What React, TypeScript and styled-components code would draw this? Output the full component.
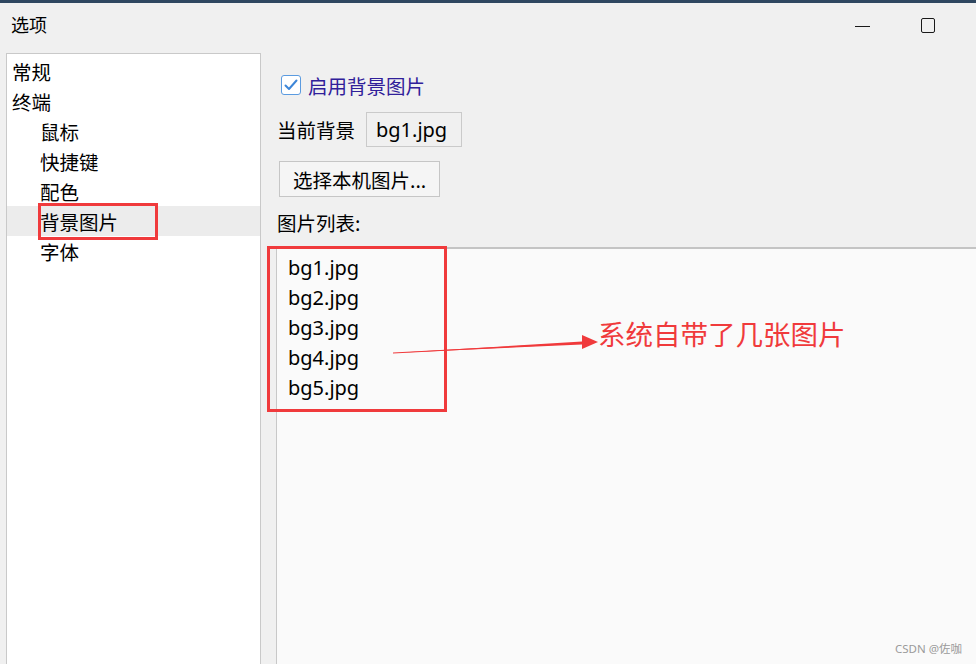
import styled, { createGlobalStyle } from "styled-components";

const GlobalStyle = createGlobalStyle`
  html, body {
    margin: 0;
    padding: 0;
    background: #f0f0f0;
  }
  body {
    font-family: "Noto Sans", "Noto Sans CJK SC", sans-serif;
    color: #000;
  }
`;

const Window = styled.div`
  width: 976px;
  height: 664px;
  background: #f0f0f0;
  border-top: 3px solid #2f4760;
  box-sizing: border-box;
  display: flex;
  flex-direction: column;
  overflow: hidden;
  position: relative;
`;

const TitleBar = styled.div`
  height: 50px;
  display: flex;
  align-items: center;
  padding: 0 0 8px 11px;
  box-sizing: border-box;
`;

const Title = styled.div`
  font-family: "Noto Sans CJK SC", sans-serif;
  font-size: 18px;
  flex: 1;
`;

const MinBtn = styled.div`
  width: 15px;
  height: 1px;
  background: #1a1a1a;
  margin-right: 51px;
  margin-top: 4px;
`;

const MaxBtn = styled.div`
  width: 14px;
  height: 15px;
  border: 1.5px solid #1a1a1a;
  border-radius: 2px;
  box-sizing: border-box;
  margin-right: 41px;
  margin-top: 3px;
`;

const Body = styled.div`
  flex: 1;
  display: flex;
  min-height: 0;
`;

const Sidebar = styled.div`
  width: 255px;
  margin-left: 6px;
  background: #fff;
  border: 1px solid #c9c9c9;
  border-bottom: none;
  box-sizing: border-box;
  padding-top: 2px;
`;

const TreeItem = styled.div<{ $depth: number; $selected?: boolean }>`
  height: 30px;
  display: flex;
  align-items: center;
  padding-left: ${(p) => (p.$depth ? 33 : 5)}px;
  background: ${(p) => (p.$selected ? "#ececec" : "transparent")};
  font-family: "Noto Sans CJK SC", sans-serif;
  font-size: 19.5px;
  padding-top: 1px;
  box-sizing: border-box;
`;

const Marked = styled.span<{ $left: number; $right: number; $padY: number }>`
  position: relative;
  &::after {
    content: "";
    position: absolute;
    left: -${(p) => p.$left}px;
    right: -${(p) => p.$right}px;
    top: -${(p) => p.$padY}px;
    bottom: -${(p) => p.$padY}px;
    border: 3px solid #f03a3c;
    pointer-events: none;
  }
`;

const Content = styled.div`
  flex: 1;
  margin-left: 15px;
  display: flex;
  flex-direction: column;
  min-width: 0;
`;

const CheckRow = styled.label`
  margin-top: 20px;
  height: 24px;
  display: flex;
  align-items: center;
  gap: 7px;
  padding-left: 5px;
  font-family: "Noto Sans CJK SC", sans-serif;
  font-size: 19.5px;
  color: #30209a;
`;

const CheckBox = styled.span`
  width: 20px;
  height: 20px;
  box-sizing: border-box;
  border: 1.5px solid #5b9be0;
  border-radius: 3px;
  background: #fff;
  display: flex;
  align-items: center;
  justify-content: center;
`;

const FieldRow = styled.div`
  margin-top: 15px;
  display: flex;
  align-items: center;
`;

const Label = styled.div`
  font-family: "Noto Sans CJK SC", sans-serif;
  font-size: 19.5px;
  padding-left: 1px;
  width: 89px;
`;

const ValueBox = styled.div`
  height: 35px;
  width: 96px;
  box-sizing: border-box;
  border: 1.5px solid #cacaca;
  display: flex;
  align-items: center;
  padding-left: 9px;
  font-size: 20px;
`;

const Button = styled.button`
  margin-top: 14px;
  margin-left: 3px;
  width: 161px;
  height: 36px;
  box-sizing: border-box;
  border: 1.5px solid #c6c6c6;
  background: #f5f5f5;
  border-radius: 0;
  font-family: "Noto Sans CJK SC", sans-serif;
  font-size: 19.5px;
  color: #000;
  text-align: left;
  padding: 0 0 0 13px;
`;

const SectionLabel = styled.div`
  margin-top: 14px;
  height: 24px;
  line-height: 24px;
  padding-left: 1px;
  font-family: "Noto Sans CJK SC", sans-serif;
  font-size: 19.5px;
`;

const ListPanel = styled.div`
  margin-top: 12px;
  flex: 1;
  background: #fafafa;
  border-top: 2px solid #c4c4c4;
  border-left: 1px solid #c8c8c8;
  padding: 4px 0 0 11px;
  position: relative;
`;

const ListWrap = styled.div`
  display: inline-flex;
  flex-direction: column;
  position: relative;
  &::after {
    content: "";
    position: absolute;
    left: -21px;
    top: -7px;
    width: 180px;
    height: 166px;
    box-sizing: border-box;
    border: 3px solid #f03a3c;
  }
`;

const ListItem = styled.div`
  height: 30px;
  line-height: 30px;
  font-size: 20px;
`;

const Callout = styled.div`
  position: absolute;
  left: 116px;
  top: 70px;
  display: flex;
  align-items: flex-start;
`;

const Arrow = styled.svg`
  margin-top: 13px;
  flex: none;
`;

const CalloutText = styled.span`
  font-family: "Noto Sans CJK SC", sans-serif;
  font-size: 27.5px;
  line-height: 28px;
  color: #f03a3c;
  margin-left: -1px;
`;

const Watermark = styled.div`
  position: absolute;
  right: 14px;
  bottom: 8px;
  font-family: "Noto Sans", "Noto Sans CJK SC", sans-serif;
  font-size: 11.5px;
  color: #9a9a9a;
`;

const tree = [
  { label: "常规", depth: 0 },
  { label: "终端", depth: 0 },
  { label: "鼠标", depth: 1 },
  { label: "快捷键", depth: 1 },
  { label: "配色", depth: 1 },
  { label: "背景图片", depth: 1, selected: true },
  { label: "字体", depth: 1 },
];

const images = ["bg1.jpg", "bg2.jpg", "bg3.jpg", "bg4.jpg", "bg5.jpg"];

export default function App() {
  return (
    <Window>
      <GlobalStyle />
      <TitleBar>
        <Title>选项</Title>
        <MinBtn />
        <MaxBtn />
      </TitleBar>
      <Body>
        <Sidebar>
          {tree.map((t) => (
            <TreeItem key={t.label} $depth={t.depth} $selected={t.selected}>
              {t.selected ? (
                <Marked $left={2} $right={40} $padY={4}>{t.label}</Marked>
              ) : (
                t.label
              )}
            </TreeItem>
          ))}
        </Sidebar>
        <Content>
          <CheckRow>
            <CheckBox>
              <svg width="14" height="12" viewBox="0 0 14 12">
                <path d="M1.5 6.5 L5 10 L12.5 1.5" fill="none" stroke="#3d86d8" strokeWidth="2" strokeLinecap="round" strokeLinejoin="round" />
              </svg>
            </CheckBox>
            启用背景图片
          </CheckRow>
          <FieldRow>
            <Label>当前背景</Label>
            <ValueBox>bg1.jpg</ValueBox>
          </FieldRow>
          <Button>选择本机图片...</Button>
          <SectionLabel>图片列表:</SectionLabel>
          <ListPanel>
            <ListWrap>
              {images.map((img) => (
                <ListItem key={img}>{img}</ListItem>
              ))}
            </ListWrap>
            <Callout>
              <Arrow width="206" height="24" viewBox="0 0 206 24">
                <path d="M0 21 L189 9.5 L189 12.5 Z" fill="#f03a3c" />
                <path d="M189 3 L205 10 L189 17 Z" fill="#f03a3c" />
                <path d="M0 21 L190 11" stroke="#f03a3c" strokeWidth="1" />
              </Arrow>
              <CalloutText>系统自带了几张图片</CalloutText>
            </Callout>
          </ListPanel>
        </Content>
      </Body>
      <Watermark>CSDN @佐咖</Watermark>
    </Window>
  );
}
